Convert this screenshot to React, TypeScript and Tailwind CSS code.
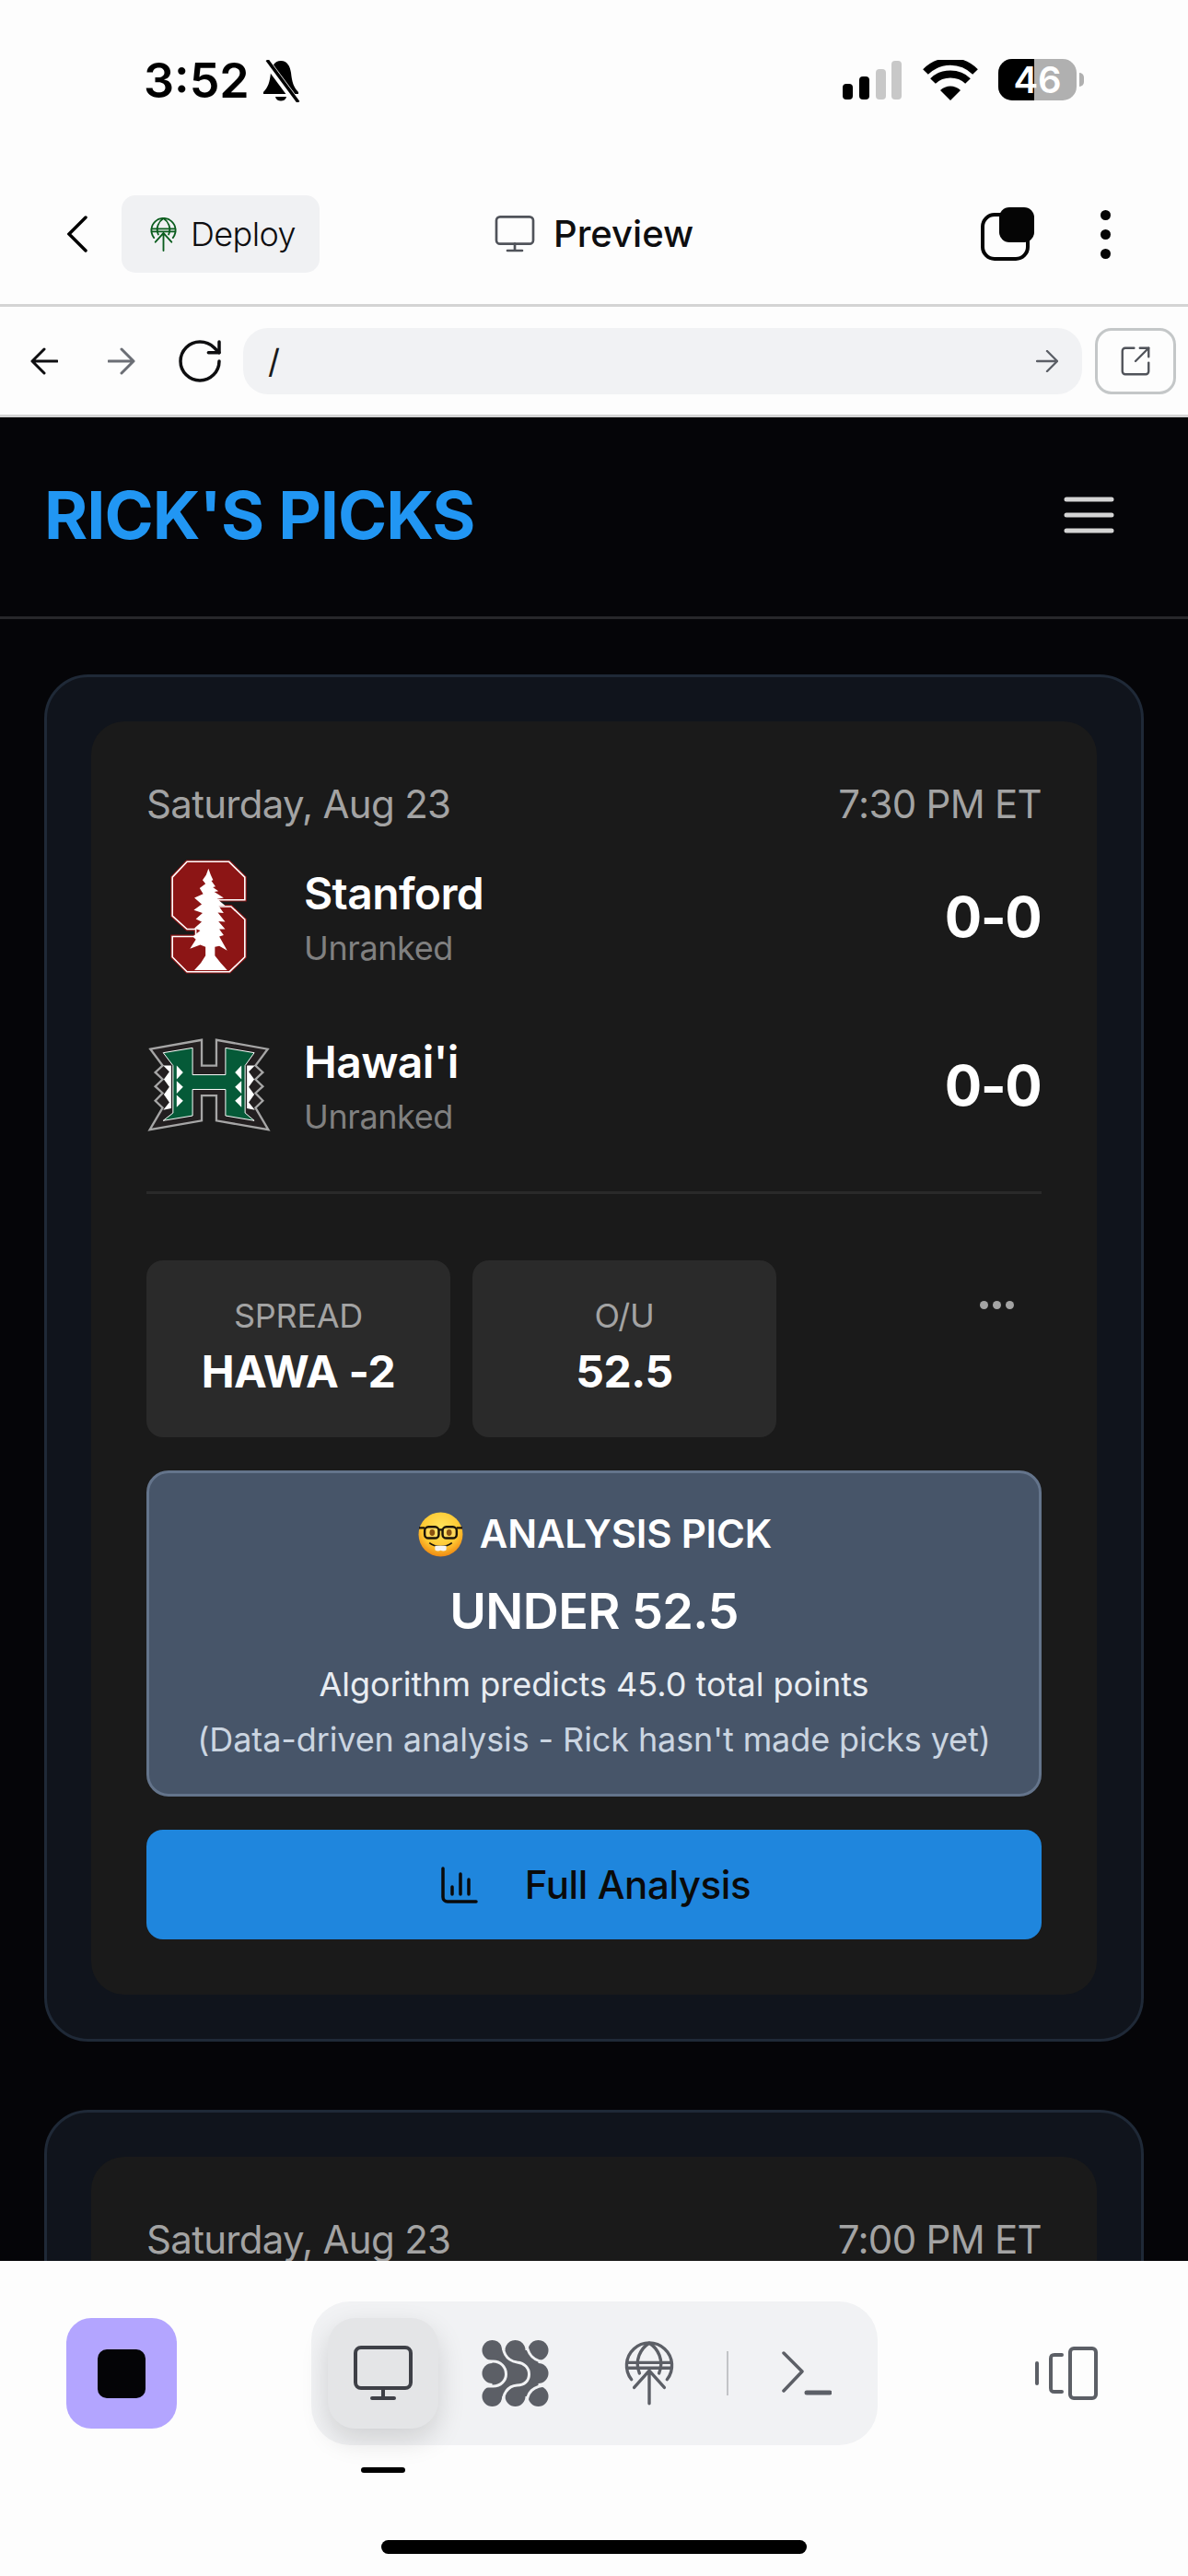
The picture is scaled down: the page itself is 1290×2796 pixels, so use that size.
import { RotateCw, SquareArrowOutUpRight } from 'lucide-react';

function GlobeUp({ className, color, weight = 3.5 }: { className: string; color: string; weight?: number }) {
  return (
    <svg viewBox="0 0 56 72" fill="none" stroke={color} strokeWidth={weight} strokeLinecap="round" strokeLinejoin="round" className={className}>
      <path d="M8 43 A25.5 25.5 0 1 1 48 43" />
      <path d="M17 36 C11 22 18 8 28 2 C38 8 45 22 39 36" />
      <path d="M3 24 H53 M3 30 H53" />
      <path d="M28 70 V33 M11 52 L28 33 L45 52" />
    </svg>
  );
}

function Monitor({ className, color }: { className: string; color: string }) {
  return (
    <svg viewBox="0 0 64 60" fill="none" stroke={color} strokeWidth="4" strokeLinecap="round" className={className}>
      <rect x="2" y="2" width="60" height="44" rx="6" />
      <path d="M32 46 V57 M20 57 H44" />
    </svg>
  );
}

function AgentIcon() {
  return (
    <svg viewBox="0 0 72 72" className="w-[73px] h-[72px]">
      <g fill="#5c5f66">
        <rect x="11" y="11" width="50" height="50" />
        {[11, 36, 61].map((x) =>
          [11, 36, 61].map((y) => <ellipse key={`${x}-${y}`} cx={x} cy={y} rx="11" ry="11" />),
        )}
      </g>
      <g fill="none" stroke="#f1f2f4" strokeWidth="3">
        <path d="M22 -1 C22 12 25 22 38 24 C46 25 51 30 51 37 C51 44 46 49 38 49 C27 50 22 58 22 73" />
        <path d="M-1 23 H12 C20 23 26 29 26 37 C26 44 20 50 12 50 H-1" />
        <path d="M48 -1 C48 14 54 24 73 24" />
        <path d="M73 49 C55 49 48 56 48 73" />
      </g>
    </svg>
  );
}

function StanfordLogo() {
  const s = '215,95 358,95 412,148 412,225 320,225 320,248 365,248 412,292 412,420 360,470 215,470 165,420 165,350 245,350 245,325 215,325 165,280 165,148';
  return (
    <svg viewBox="155 85 267 395" className="w-[85px] h-[126px]">
      <polygon points={s} fill="#8c1515" stroke="#8c1515" strokeWidth="12" strokeLinejoin="miter" />
      <polygon points={s} fill="#8c1515" stroke="#ffffff" strokeWidth="5" />
      <polygon
        fill="#ffffff"
        points="288,118 296,140 304,158 298,160 312,180 303,182 322,195 308,198 340,218 318,222 345,245 322,245 340,270 320,268 345,300 322,298 345,325 325,325 340,345 325,350 352,398 325,382 310,385 310,415 330,440 352,465 240,465 262,440 278,415 278,385 260,378 225,392 245,360 235,350 260,330 240,322 265,300 245,290 268,270 238,260 265,240 240,218 270,205 258,185 278,170 268,158 280,140"
      />
    </svg>
  );
}

function HawaiiLogo() {
  return (
    <svg viewBox="88 678 404 310" className="w-[134px] h-[103px]">
      <polygon
        fill="#231f20"
        stroke="#a6a6a6"
        strokeWidth="7"
        points="98,716 266,686 266,770 314,770 314,686 482,716 442,770 466,792 442,815 466,838 442,860 466,885 442,908 484,980 314,950 314,868 266,868 266,950 96,980 138,908 114,885 138,860 114,838 138,815 114,792 138,770"
      />
      <polygon
        fill="#ffffff"
        points="140,770 166,770 166,910 140,915 160,890 142,865 160,840 142,815 160,790"
      />
      <polygon
        fill="#ffffff"
        points="440,770 414,770 414,910 440,915 420,890 438,865 420,840 438,815 420,790"
      />
      <polygon
        fill="#055a38"
        stroke="#ffffff"
        strokeWidth="3"
        points="140,728 236,712 236,800 344,800 344,712 438,728 408,770 408,925 438,950 344,934 344,848 236,848 236,934 140,950 172,925 172,770"
      />
      <g fill="#ffffff">
        <polygon points="184,770 205,792 184,815" />
        <polygon points="184,820 205,840 184,862" />
        <polygon points="184,866 205,885 184,906" />
        <polygon points="396,770 375,792 396,815" />
        <polygon points="396,820 375,840 396,862" />
        <polygon points="396,866 375,885 396,906" />
      </g>
    </svg>
  );
}

function NerdFace() {
  return (
    <svg viewBox="0 0 48 48" className="w-[49px] h-[49px]">
      <defs>
        <radialGradient id="nerdSkin" cx="50%" cy="35%" r="65%">
          <stop offset="0%" stopColor="#ffe45c" />
          <stop offset="65%" stopColor="#ffc933" />
          <stop offset="100%" stopColor="#f08a12" />
        </radialGradient>
      </defs>
      <circle cx="24" cy="24" r="23.5" fill="url(#nerdSkin)" />
      <g fill="none" stroke="#1c1408" strokeWidth="2.4">
        <rect x="7" y="16" width="15" height="12" rx="4" fill="#ffe58a" fillOpacity="0.35" />
        <rect x="26" y="16" width="15" height="12" rx="4" fill="#ffe58a" fillOpacity="0.35" />
        <path d="M22 19 H26 M1 17 H7 M41 17 H47" />
        <path d="M12 33 C18 38 30 38 36 33" strokeWidth="1.6" />
      </g>
      <ellipse cx="15" cy="22" rx="2.8" ry="3.4" fill="#8a5210" />
      <ellipse cx="33" cy="22" rx="2.8" ry="3.4" fill="#8a5210" />
      <path d="M18 36 H30 V40 C30 42 26 42 24 41 C22 42 18 42 18 40 Z" fill="#f5f5f5" />
    </svg>
  );
}

function Odds({ label, value }: { label: string; value: string }) {
  return (
    <div className="w-[330px] h-[192px] rounded-[18px] bg-[#2a2a2a] flex flex-col items-center pt-[30px]">
      <span className="text-[36px] leading-[60px] text-[#a3a3a3] tracking-[-0.3px]">{label}</span>
      <span className="mt-[1px] text-[48px] leading-[60px] font-bold text-white tracking-[-0.4px]">{value}</span>
    </div>
  );
}

function TeamRow({ name, logo }: { name: string; logo: React.ReactNode }) {
  return (
    <div className="flex items-center h-[135px]">
      <div className="w-[135px] h-[135px] flex items-center justify-center">{logo}</div>
      <div className="ml-[37px] flex flex-col pt-[4px]">
        <span className="text-[48px] leading-[66px] font-semibold text-white mt-[-3px] tracking-[-0.6px] ml-[-1px]">{name}</span>
        <span className="text-[36px] leading-[48px] text-[#808080] mt-[2px] tracking-[-0.4px] ml-[-1px]">Unranked</span>
      </div>
      <span className="ml-auto text-[60px] leading-[72px] font-bold text-white tracking-[-1.6px] mr-[1px]">0-0</span>
    </div>
  );
}

function GameCard({ time, children }: { time: string; children?: React.ReactNode }) {
  return (
    <div className="rounded-[48px] border-[3px] border-[#1f2937] bg-[#10141c] p-[48px] shrink-0">
      <div className="rounded-[36px] bg-[#1a1a1a] p-[60px]">
        <div className="flex justify-between items-center h-[60px] text-[42px] leading-[46px] text-[#a3a3a3] tracking-[-0.7px]">
          <span>Saturday, Aug 23</span>
          <span>{time}</span>
        </div>
        {children}
      </div>
    </div>
  );
}

export default function App() {
  return (
    <div className="w-[1290px] h-[2796px] flex flex-col overflow-hidden bg-[#fdfdfd] font-[Inter,sans-serif]">
      {/* status bar */}
      <div className="h-[184px] flex items-start shrink-0 pl-[156px] pr-[113px] pt-[58px]">
        <span className="text-[52px] leading-[60px] font-semibold text-black">3:52</span>
        <svg viewBox="0 0 42 46" className="w-[42px] h-[46px] ml-[13px] mt-[7px]">
          <path d="M21 1 C28 1 31 7 32 14 C33 24 35 30 40 35 V37 H2 V35 C7 30 9 24 10 14 C11 7 14 1 21 1 Z" fill="#000" />
          <path d="M15 40 H27 C26 46 16 46 15 40 Z" fill="#000" />
          <path d="M4 0 L38 46" stroke="#fdfdfd" strokeWidth="8" />
          <path d="M6 0 L40 46" stroke="#000" strokeWidth="3.5" />
        </svg>
        <svg viewBox="0 0 64 42" className="w-[64px] h-[42px] ml-auto mt-[8px]">
          <rect x="0" y="25" width="11" height="17" rx="4" fill="#000" />
          <rect x="18" y="17" width="11" height="25" rx="4" fill="#000" />
          <rect x="36" y="9" width="11" height="33" rx="4" fill="#c8c8c8" />
          <rect x="53" y="0" width="11" height="42" rx="4" fill="#c8c8c8" />
        </svg>
        <svg viewBox="0 0 60 44" className="w-[60px] h-[44px] ml-[23px] mt-[7px]">
          <path d="M30 44 L19 33 C25 27 35 27 41 33 Z" fill="#000" />
          <path d="M11 23 C21 13 39 13 49 23" fill="none" stroke="#000" strokeWidth="8" />
          <path d="M3 13 C18 -2 42 -2 57 13" fill="none" stroke="#000" strokeWidth="8" />
        </svg>
        <div className="ml-[22px] mt-[6px] flex items-center">
          <div className="relative w-[85px] h-[45px] rounded-[15px] bg-[#b0b0b0] flex items-center justify-center">
            <div className="absolute left-0 top-0 bottom-0 w-[39px] rounded-l-[15px] bg-black" />
            <span className="relative text-[40px] leading-[44px] font-semibold text-white">46</span>
          </div>
          <div className="w-[5px] h-[15px] ml-[3px] rounded-r-full bg-[#b0b0b0]" />
        </div>
      </div>

      {/* editor header */}
      <div className="h-[146px] shrink-0 flex items-center pl-[73px] pr-[84px] pb-[6px]">
        <svg viewBox="0 0 22 40" className="w-[22px] h-[40px] shrink-0" fill="none" stroke="#000" strokeWidth="3.5" strokeLinecap="round">
          <path d="M20 2 L2 20 L20 38" />
        </svg>
        <div className="ml-[37px] w-[215px] h-[84px] rounded-[15px] bg-[#f0f1f3] flex items-center pl-[31px]">
          <GlobeUp className="w-[29px] h-[37px]" color="#0b5d1e" weight={3.6} />
          <span className="ml-[15px] text-[36px] leading-[48px] font-light text-[#0e0e10] tracking-[-0.6px]">Deploy</span>
        </div>
        <div className="ml-[190px] flex items-center">
          <Monitor className="w-[44px] h-[40px]" color="#50535a" />
          <span className="ml-[20px] text-[40px] leading-[48px] font-medium text-[#0e0e10]">Preview</span>
        </div>
        <div className="ml-auto flex items-center">
          <div className="relative w-[58px] h-[58px]">
            <div className="absolute left-0 bottom-0 w-[53px] h-[52px] rounded-[15px] border-[4px] border-[#050505]" />
            <div className="absolute right-0 top-0 w-[38px] h-[38px] rounded-[11px] bg-[#050505]" />
          </div>
          <div className="ml-[72px] flex flex-col gap-[10px]">
            <div className="w-[11px] h-[11px] rounded-full bg-[#050505]" />
            <div className="w-[11px] h-[11px] rounded-full bg-[#050505]" />
            <div className="w-[11px] h-[11px] rounded-full bg-[#050505]" />
          </div>
        </div>
      </div>

      {/* browser toolbar */}
      <div className="h-[123px] shrink-0 border-y-[3px] border-[#d4d4d4] flex items-center pl-[33px]">
        <svg viewBox="0 0 30 30" className="w-[30px] h-[30px]" fill="none" stroke="#0e0e10" strokeWidth="3" strokeLinecap="round" strokeLinejoin="round">
          <path d="M29 15 H2 M15 2 L2 15 L15 28" />
        </svg>
        <svg viewBox="0 0 30 30" className="w-[30px] h-[30px] ml-[54px]" fill="none" stroke="#6b6e75" strokeWidth="3" strokeLinecap="round" strokeLinejoin="round">
          <path d="M1 15 H28 M15 2 L28 15 L15 28" />
        </svg>
        <RotateCw size={56} strokeWidth={1.5} color="#0e0e10" className="ml-[42px]" />
        <div className="ml-[19px] w-[911px] h-[72px] rounded-[27px] bg-[#f1f2f4] flex items-center pl-[27px] pr-[26px]">
          <span className="text-[36px] text-[#1a1a1a]">/</span>
          <svg viewBox="0 0 24 24" className="w-[24px] h-[24px] ml-auto" fill="none" stroke="#5c5f66" strokeWidth="2.4" strokeLinecap="round" strokeLinejoin="round">
            <path d="M1 12 H23 M12 1 L23 12 L12 23" />
          </svg>
        </div>
        <div className="ml-[14px] w-[88px] h-[72px] rounded-[18px] border-[3px] border-[#c4c7c8] flex items-center justify-center">
          <SquareArrowOutUpRight size={38} strokeWidth={1.5} color="#50535a" />
        </div>
      </div>

      {/* app viewport */}
      <div className="flex-1 min-h-0 bg-[#050508] overflow-hidden">
        <div className="h-[219px] border-b-[3px] border-[#27272a] flex items-center justify-between pl-[48px] pr-[80px] pb-[4px]">
          <span className="text-[72px] leading-[80px] font-bold tracking-[-1px] text-[#2196f3]">RICK'S PICKS</span>
          <svg viewBox="0 0 55 40" className="w-[55px] h-[40px]" fill="none" stroke="#d4d4d4" strokeWidth="5" strokeLinecap="round">
            <path d="M3 3 H52 M3 20 H52 M3 37 H52" />
          </svg>
        </div>
        <div className="flex flex-col gap-[74px] px-[48px] pt-[60px]">
          <GameCard time="7:30 PM ET">
            <div className="mt-[24px] flex flex-col gap-[48px] pb-[48px] border-b-[3px] border-[#2a2a2a]">
              <TeamRow name="Stanford" logo={<StanfordLogo />} />
              <TeamRow name="Hawai'i" logo={<HawaiiLogo />} />
            </div>
            <div className="mt-[72px] flex items-start gap-[24px]">
              <Odds label="SPREAD" value="HAWA -2" />
              <Odds label="O/U" value="52.5" />
              <div className="ml-auto mr-[30px] mt-[44px] flex gap-[5px]">
                <div className="w-[9px] h-[9px] rounded-full bg-[#a3a3a3]" />
                <div className="w-[9px] h-[9px] rounded-full bg-[#a3a3a3]" />
                <div className="w-[9px] h-[9px] rounded-full bg-[#a3a3a3]" />
              </div>
            </div>
            <div className="mt-[36px] h-[354px] rounded-[24px] border-[3px] border-[#64748b] bg-[#475569] flex flex-col items-center pt-[36px]">
              <div className="flex items-center h-[60px] gap-[18px] pl-[2px]">
                <NerdFace />
                <span className="text-[42px] leading-[60px] font-semibold text-white tracking-[-0.2px]">ANALYSIS PICK</span>
              </div>
              <span className="mt-[16px] text-[54px] leading-[76px] font-semibold text-white tracking-[-0.6px]">UNDER 52.5</span>
              <span className="mt-[11px] text-[36px] leading-[60px] text-[#e9edf2]">Algorithm predicts 45.0 total points</span>
              <span className="text-[36px] leading-[60px] text-[#cbd5e1] tracking-[-0.1px]">(Data-driven analysis - Rick hasn't made picks yet)</span>
            </div>
            <div className="mt-[36px] h-[119px] rounded-[18px] bg-[#1f86dd] flex items-center justify-center gap-[51px] pl-[4px]">
              <svg viewBox="0 0 40 40" className="w-[40px] h-[40px]" fill="none" stroke="#0a0a0a" strokeWidth="3.5" strokeLinecap="round">
                <path d="M2 2 V33 C2 36 4 38 7 38 H38 M12 22 V30 M21 8 V30 M30 14 V30" />
              </svg>
              <span className="text-[42px] leading-[60px] font-medium text-[#0a0a0a] tracking-[-0.4px]">Full Analysis</span>
            </div>
          </GameCard>
          <GameCard time="7:00 PM ET" />
        </div>
      </div>

      {/* bottom tool dock */}
      <div className="h-[342px] shrink-0 bg-[#fdfdfd] flex flex-col">
        <div className="flex items-start pl-[72px] pt-[44px]">
          <div className="mt-[18px] w-[120px] h-[120px] rounded-[27px] bg-[#b3a5ff] flex items-center justify-center">
            <div className="w-[52px] h-[53px] rounded-[10px] bg-[#040406]" />
          </div>
          <div className="ml-[146px] w-[615px] h-[156px] rounded-[42px] bg-[#f1f2f4] flex items-center pl-[18px]">
            <div className="relative w-[120px] h-[120px] rounded-[30px] bg-[#e4e5e7] shadow-[0_12px_30px_rgba(0,0,0,0.14)] flex items-center justify-center">
              <Monitor className="w-[64px] h-[60px]" color="#3e4047" />
              <div className="absolute left-[36px] top-[162px] w-[48px] h-[6px] rounded-full bg-black" />
            </div>
            <div className="ml-[47px]">
              <AgentIcon />
            </div>
            <GlobeUp className="ml-[82px] w-[54px] h-[72px]" color="#5c5f66" />
            <div className="ml-[57px] w-[2px] h-[48px] bg-[#c2c4c7]" />
            <svg viewBox="0 0 54 48" className="ml-[58px] w-[54px] h-[48px]" fill="none" stroke="#5c5f66" strokeWidth="3.5" strokeLinecap="round" strokeLinejoin="round">
              <path d="M2 2 L22 22 L2 43" />
              <path d="M27 45 H52" strokeWidth="5" />
            </svg>
          </div>
          <svg viewBox="0 0 68 58" className="ml-[171px] mt-[49px] w-[68px] h-[58px]" fill="none" stroke="#5c5f66" strokeWidth="4" strokeLinecap="round" strokeLinejoin="round">
            <rect x="38" y="2" width="28" height="54" rx="4" />
            <path d="M29 9 H21 C18 9 17 10 17 13 V45 C17 48 18 49 21 49 H29" />
            <path d="M2 18 V40" />
          </svg>
        </div>
        <div className="mt-auto mb-[24px] mx-auto w-[462px] h-[15px] rounded-full bg-black" />
      </div>
    </div>
  );
}
